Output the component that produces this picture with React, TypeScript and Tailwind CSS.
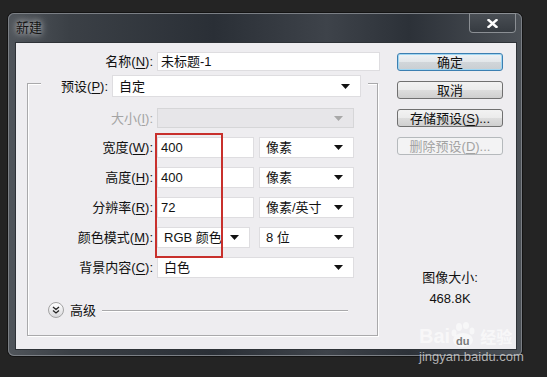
import { ReactNode } from "react";

function Mn({ children }: { children: ReactNode }) {
  return <span className="underline underline-offset-2">{children}</span>;
}

function Caret({ disabled }: { disabled?: boolean }) {
  return (
    <svg width="9" height="5" viewBox="0 0 9 5" className="shrink-0">
      <path d="M0 0h9L4.5 5z" fill={disabled ? "#a8a8a8" : "#111"} />
    </svg>
  );
}

function Select({
  width,
  height = 21,
  value,
  disabled,
}: {
  width: string;
  height?: number;
  value?: string;
  disabled?: boolean;
}) {
  return (
    <div
      className={`${width} flex items-center justify-between pl-[6px] pr-[10px] border ${
        disabled ? "bg-[#e7e6e9] border-[#d6d6d8]" : "bg-white border-[#dedde0]"
      }`}
      style={{ height }}
    >
      <span>{value}</span>
      <Caret disabled={disabled} />
    </div>
  );
}

function Field({ width, value }: { width: string; value: string }) {
  return (
    <div className={`${width} h-[21px] flex items-center pl-[3px] bg-white border border-[#dedde0]`}>
      {value}
    </div>
  );
}

function Row({ label, children, disabled }: { label: ReactNode; children: ReactNode; disabled?: boolean }) {
  return (
    <div className="flex items-center gap-[4px] mt-[9px]">
      <div className={`w-[125px] text-right ${disabled ? "text-[#a4a4a4]" : ""}`}>{label}</div>
      {children}
    </div>
  );
}

function Button({ children, primary, disabled }: { children: ReactNode; primary?: boolean; disabled?: boolean }) {
  return (
    <div
      className={`h-[18px] w-[106px] flex items-center justify-center rounded-[3px] border ${
        disabled
          ? "border-[#b5b9bc] bg-[#f3f3f4] text-[#a3a3a3]"
          : primary
          ? "border-[#3c7fb1] bg-[linear-gradient(#eef3f6_0%,#e2e6e9_50%,#d1d6da_51%,#c9ced2_100%)] shadow-[inset_0_0_0_1px_#9fd6f2]"
          : "border-[#707070] bg-[linear-gradient(#f2f2f2_0%,#ebebeb_50%,#dddddd_51%,#cfcfcf_100%)]"
      }`}
    >
      {children}
    </div>
  );
}

export default function App() {
  return (
    <div className="relative w-[547px] h-[377px] overflow-hidden bg-[#242424] pt-[13px] pl-[8px] text-[13px] leading-none text-[#111] font-['Liberation_Sans','Noto_Sans_CJK_SC',sans-serif]">
      {/* Window frame */}
      <div className="w-[514px] h-[343px] rounded-[6px] flex flex-col bg-[linear-gradient(90deg,#50555b_0%,#3b4046_12%,#2a2f36_40%,#3e434a_62%,#2c3138_78%,#4c5157_100%)] shadow-[0_0_0_1px_#141414,inset_0_0_0_1px_#7b7f85]">
        {/* Title bar */}
        <div className="h-[29px] flex items-start justify-between pl-[8px] pr-[6px]">
          <div className="self-center text-[#151515] [text-shadow:0_0_6px_rgba(255,255,255,0.7),0_0_10px_rgba(255,255,255,0.5)]">
            新建
          </div>
          <div className="w-[47px] h-[20px] flex items-center justify-center rounded-b-[4px] bg-[linear-gradient(#4a4f55,#353a40)] shadow-[inset_0_0_0_1px_#8b8f94]">
            <svg width="11" height="9" viewBox="0 0 11 9">
              <path d="M1.5 1l8 7M9.5 1l-8 7" stroke="#fff" strokeWidth="2.4" strokeLinecap="square" />
            </svg>
          </div>
        </div>

        {/* Client */}
        <div className="ml-[7px] w-[502px] h-[308px] border border-[#2e3237] bg-[#eeedf0] flex">
          {/* Left column */}
          <div className="w-[364px] flex flex-col">
            <div className="mt-[9px] flex items-center gap-[4px]">
              <div className="w-[137px] text-right">
                名称(<Mn>N</Mn>):
              </div>
              <div className="w-[223px] h-[19px] flex items-center pl-[3px] bg-white border border-[#dedde0]">
                未标题-1
              </div>
            </div>

            {/* Group box */}
            <div className="mt-[12px] ml-[11px] w-[351px] flex flex-col pb-[17px] border border-[#a9a9ab] shadow-[1px_1px_0_#fff,inset_1px_1px_0_#fff]">
              <div className="-mt-[9px] ml-[13px] w-[327px] h-[22px] flex items-center gap-[4px] bg-[#eeedf0]">
                <div className="w-[67px] text-right">
                  预设(<Mn>P</Mn>):
                </div>
                <Select width="w-[249px]" height={22} value="自定" />
              </div>

              <div className="flex items-center gap-[4px] mt-[11px]">
                <div className="w-[125px] text-right text-[#a4a4a4]">
                  大小(<Mn>I</Mn>):
                </div>
                <Select width="w-[197px]" height={20} disabled />
              </div>

              <Row label={<>宽度(<Mn>W</Mn>):</>}>
                <Field width="w-[97px]" value="400" />
                <div className="ml-[1px]">
                  <Select width="w-[95px]" value="像素" />
                </div>
              </Row>
              <Row label={<>高度(<Mn>H</Mn>):</>}>
                <Field width="w-[97px]" value="400" />
                <div className="ml-[1px]">
                  <Select width="w-[95px]" value="像素" />
                </div>
              </Row>
              <Row label={<>分辨率(<Mn>R</Mn>):</>}>
                <Field width="w-[97px]" value="72" />
                <div className="ml-[1px]">
                  <Select width="w-[95px]" value="像素/英寸" />
                </div>
              </Row>
              <Row label={<>颜色模式(<Mn>M</Mn>):</>}>
                <Select width="w-[93px]" value="RGB 颜色" />
                <div className="ml-[5px]">
                  <Select width="w-[95px]" value="8 位" />
                </div>
              </Row>
              <Row label={<>背景内容(<Mn>C</Mn>):</>}>
                <Select width="w-[197px]" value="白色" />
              </Row>

              <div className="mt-[24px] pl-[20px] h-[16px] flex items-center">
                <div className="w-[16px] h-[16px] rounded-full border border-[#a3a3a3] bg-[linear-gradient(#ffffff,#d9d9dc)] flex items-center justify-center">
                  <svg width="8" height="8" viewBox="0 0 8 8">
                    <path d="M1 1l3 2.5L7 1M1 4.5L4 7l3-2.5" stroke="#222" strokeWidth="1.3" fill="none" />
                  </svg>
                </div>
                <span className="ml-[6px]">高级</span>
                <div className="ml-[6px] w-[246px] h-px bg-[#a9a9ab] shadow-[0_1px_0_#fff]" />
              </div>
            </div>
          </div>

          {/* Right column */}
          <div className="ml-[17px] w-[106px] pt-[10px] flex flex-col gap-[10px]">
            <Button primary>确定</Button>
            <Button>取消</Button>
            <Button>
              存储预设(<Mn>S</Mn>)...
            </Button>
            <Button disabled>
              删除预设(<Mn>D</Mn>)...
            </Button>
            <div className="mt-[106px] flex flex-col items-center gap-[8px]">
              <span>图像大小:</span>
              <span>468.8K</span>
            </div>
          </div>
        </div>
      </div>

      {/* Red highlight */}
      <div className="absolute left-[155px] top-[133px] w-[68px] h-[125px] border-2 border-[#c8302c]" />

      {/* Watermark */}
      <div className="absolute left-[419px] top-[322px] flex flex-col items-start text-white/60">
        <div className="flex items-end gap-[1px] font-bold text-[20px] leading-none">
          <span>Bai</span>
          <svg width="28" height="26" viewBox="0 0 28 26" className="-mb-[2px]">
            <g fill="rgba(255,255,255,0.55)">
              <ellipse cx="8" cy="5" rx="3" ry="4" />
              <ellipse cx="15" cy="3.5" rx="3" ry="3.5" />
              <ellipse cx="3" cy="11" rx="2.5" ry="3.5" />
              <ellipse cx="21" cy="9" rx="2.5" ry="3.5" />
              <ellipse cx="12" cy="18" rx="10" ry="7" />
            </g>
            <text x="5" y="23" fontSize="11" fontWeight="bold" fill="#7a7a7a">du</text>
          </svg>
          <span className="text-[16px] font-bold">经验</span>
        </div>
        <span className="mt-[4px] text-[13px] text-[#d6d6d6]/80">jingyan.baidu.com</span>
      </div>
    </div>
  );
}
